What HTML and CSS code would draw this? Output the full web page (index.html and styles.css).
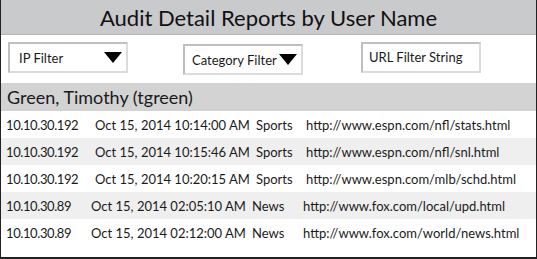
FILE: index.html
```html
<!DOCTYPE html>
<html lang="en">
<head>
    <meta charset="UTF-8">
    <title>Audit Detail Reports</title>
    <link rel="stylesheet" href="styles.css">
</head>
<body>
    <div class="frame">
        <h1 class="title">Audit Detail Reports by User Name</h1>

        <div class="filters">
            <div class="field select ip">IP Filter <span class="arrow"></span></div>
            <div class="field select category">Category Filter <span class="arrow"></span></div>
            <div class="field url">URL Filter String</div>
        </div>

        <div class="user">Green, Timothy (tgreen)</div>

        <div class="row">
            <span class="ip-addr">10.10.30.192</span><span>Oct 15, 2014 10:14:00 AM</span><span>Sports</span><span>http://www.espn.com/nfl/stats.html</span>
        </div>
        <div class="row alt">
            <span class="ip-addr">10.10.30.192</span><span>Oct 15, 2014 10:15:46 AM</span><span>Sports</span><span>http://www.espn.com/nfl/snl.html</span>
        </div>
        <div class="row">
            <span class="ip-addr">10.10.30.192</span><span>Oct 15, 2014 10:20:15 AM</span><span>Sports</span><span>http://www.espn.com/mlb/schd.html</span>
        </div>
        <div class="row alt short">
            <span class="ip-addr">10.10.30.89</span><span>Oct 15, 2014 02:05:10 AM</span><span>News</span><span>http://www.fox.com/local/upd.html</span>
        </div>
        <div class="row short">
            <span class="ip-addr">10.10.30.89</span><span>Oct 15, 2014 02:12:00 AM</span><span>News</span><span>http://www.fox.com/world/news.html</span>
        </div>
    </div>
</body>
</html>
```

FILE: styles.css
```css
* {
    margin: 0;
    padding: 0;
    box-sizing: border-box;
}

body {
    font-family: 'Lato', 'Open Sans', sans-serif;
    color: #1a1a1a;
    background: #fff;
}

.frame {
    width: 537px;
    height: 259px;
    border: 1px solid #222;
    border-top: none;
    border-bottom-width: 2px;
    overflow: hidden;
}

.title {
    height: 35px;
    background: #c9cacc;
    border-bottom: 1px solid #b5b6b8;
    font-size: 22px;
    font-weight: normal;
    text-align: center;
    line-height: 35px;
    color: #111;
}

.filters {
    display: flex;
    align-items: flex-start;
    height: 48px;
    padding: 7px 0 0 7px;
}

.field {
    width: 120px;
    height: 31px;
    border: 2px solid;
    border-color: #bfbfbf #dcdcdc #dcdcdc #bfbfbf;
    font-size: 13px;
    display: flex;
    align-items: center;
    justify-content: space-between;
    padding: 0 4px 0 9px;
}

.category {
    margin-left: 55px;
    margin-top: 2px;
    padding-left: 7px;
}

.url {
    margin-left: 58px;
    padding-left: 6px;
    align-items: flex-start;
    padding-top: 5px;
}

.arrow {
    width: 0;
    height: 0;
    border-left: 9px solid transparent;
    border-right: 9px solid transparent;
    border-top: 11px solid #000;
}

.user {
    height: 28px;
    background: #d3d3d3;
    font-size: 18px;
    line-height: 29px;
    padding-left: 6px;
}

.row {
    display: grid;
    grid-template-columns: 89px 161px 50px auto;
    height: 27px;
    align-items: center;
    padding-left: 5px;
    font-size: 13px;
}

.ip-addr {
    letter-spacing: -0.4px;
}

.row.alt {
    background: #efefef;
}

.row.short {
    grid-template-columns: 85px 161px 51px auto;
}
```
